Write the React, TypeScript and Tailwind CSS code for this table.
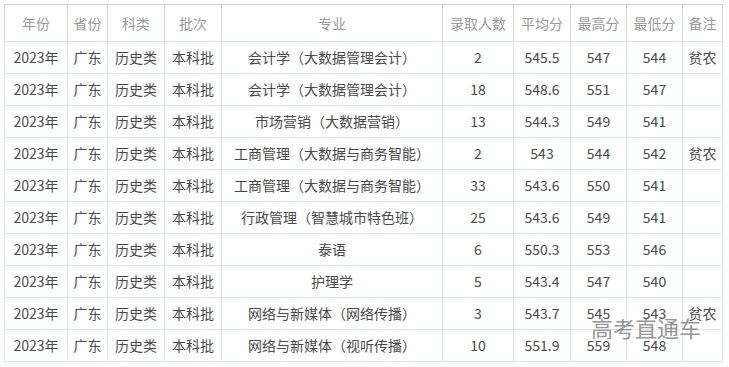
const widths = [63, 40, 57, 57, 221, 71, 57, 56, 56, 40]

const headers = ['年份', '省份', '科类', '批次', '专业', '录取人数', '平均分', '最高分', '最低分', '备注']

const rows: string[][] = [
  ['会计学（大数据管理会计）', '2', '545.5', '547', '544', '贫农'],
  ['会计学（大数据管理会计）', '18', '548.6', '551', '547', ''],
  ['市场营销（大数据营销）', '13', '544.3', '549', '541', ''],
  ['工商管理（大数据与商务智能）', '2', '543', '544', '542', '贫农'],
  ['工商管理（大数据与商务智能）', '33', '543.6', '550', '541', ''],
  ['行政管理（智慧城市特色班）', '25', '543.6', '549', '541', ''],
  ['泰语', '6', '550.3', '553', '546', ''],
  ['护理学', '5', '543.4', '547', '540', ''],
  ['网络与新媒体（网络传播）', '3', '543.7', '545', '543', '贫农'],
  ['网络与新媒体（视听传播）', '10', '551.9', '559', '548', ''],
]

export default function App() {
  return (
    <div
      className="relative w-[729px] h-[367px] bg-white overflow-hidden pt-[4px] pl-[4px]"
      style={{ fontFamily: '"Noto Sans CJK SC", "Noto Sans", sans-serif' }}
    >
      <table className="table-fixed border-collapse w-[718px] text-[14px] text-[#4a4a4a]">
        <colgroup>
          {widths.map((w, i) => (
            <col key={i} style={{ width: w }} />
          ))}
        </colgroup>
        <thead>
          <tr className="h-[37px] border-t border-[#cfcfcf]">
            {headers.map((h, i) => (
              <th
                key={i}
                className="font-normal text-[#9a9a9a] text-center border-x border-b border-x-[#d4d4d4] border-b-[#d6e2ef] p-0 whitespace-nowrap"
              >
                {h}
              </th>
            ))}
          </tr>
        </thead>
        <tbody>
          {rows.map((r, i) => (
            <tr key={i} className="h-[32px]">
              {['2023年', '广东', '历史类', '本科批', ...r].map((c, j) => (
                <td
                  key={j}
                  className="text-center border border-[#dbe5f0] p-0 whitespace-nowrap"
                >
                  {c}
                </td>
              ))}
            </tr>
          ))}
        </tbody>
      </table>

      {/* watermark over the table */}
      <div className="absolute left-[591px] top-[316px] text-[22px] leading-none text-[#7a7a7a]/80 pointer-events-none">
        高考直通车
      </div>
    </div>
  )
}
